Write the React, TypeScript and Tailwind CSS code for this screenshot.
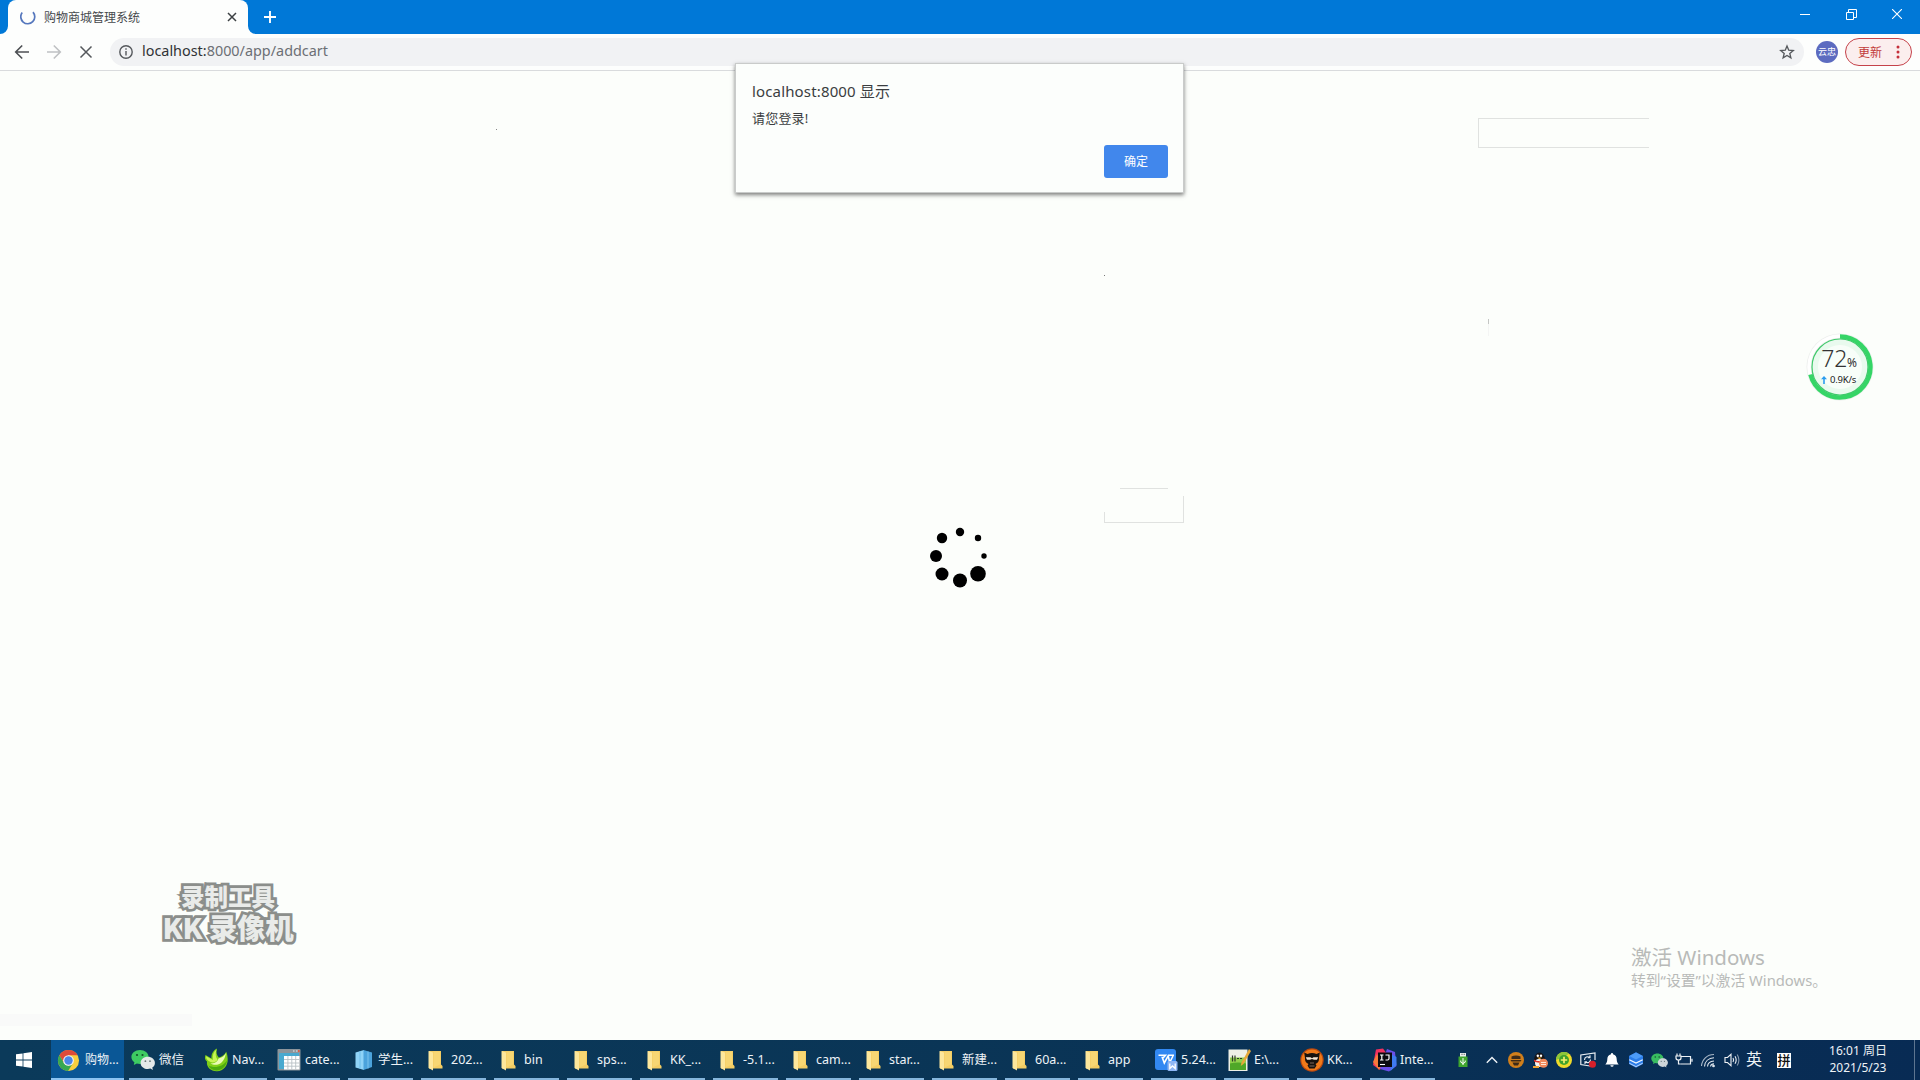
import React from "react";

const FONT = "font-['Noto_Sans','Noto_Sans_CJK_SC',sans-serif]";

/* ---------- task bar icons ---------- */

const Chrome = () => (
  <svg viewBox="0 0 24 24" className="size-[23px]">
    <circle cx="12" cy="12" r="11" fill="#f8cf3f" />
    <path d="M2.500 6.500A11 11 0 0 1 21.600 6.600H12L7.300 14.700Z" fill="#dd4b3a" />
    <path d="M2.500 6.500A11 11 0 0 0 11.600 23L16.700 14.700 12 17.400 7.300 14.700Z" fill="#37a852" />
    <circle cx="12" cy="12" r="5.600" fill="#f4f4f4" />
    <circle cx="12" cy="12" r="4.400" fill="#4a86e8" />
  </svg>
);

const WeChat = ({ className = "size-6" }: { className?: string }) => (
  <svg viewBox="0 0 24 24" className={className}>
    <path d="M9 2C4.200 2 .4 5.100 .4 9c0 2.200 1.200 4 3 5.300L2.800 17l3-1.500c1 .3 2 .5 3.200.5 4.800 0 8.600-3.100 8.600-7S13.800 2 9 2Z" fill="#3ecb62" />
    <circle cx="6" cy="7" r="1.100" fill="#14502b" />
    <circle cx="11.500" cy="7" r="1.100" fill="#14502b" />
    <path d="M16.800 8.800c-4 0-7.200 2.700-7.200 6.100s3.200 6.100 7.200 6.100c.9 0 1.800-.1 2.600-.4l2.500 1.300-.6-2.300c1.600-1.100 2.600-2.800 2.600-4.700 0-3.400-3.200-6.100-7.100-6.100Z" fill="#e3e8e8" />
    <circle cx="14.400" cy="13.200" r=".9" fill="#6b7b7b" />
    <circle cx="19" cy="13.200" r=".9" fill="#6b7b7b" />
  </svg>
);

const Navicat = () => (
  <svg viewBox="0 0 24 24" className="size-6">
    <path d="M13 .5C9 2.500 7 6.500 7.500 10.500L1.500 7C.3 10 1 12 3 13.500 2 19 7 23.500 13 23.300 19.500 23 24 17.500 23.700 11c-.1-2.800-.6-5.200-1.500-7.200-1.800 3.200-4.200 5-7.400 5.700C12.500 7 12 4 13 .5Z" fill="#7fd018" />
    <path d="M12.500 1.500C9.500 4 8.200 7.500 9 12L2 8.200C2 11 4 13 6.500 14c2.500 1 5.500.3 7-2.200C11.500 9 11.200 5 12.500 1.500Z" fill="#c8f457" />
    <path d="M22 5c-1.500 3-4.500 5-7.500 5.500-1 3-4 5.500-8 4.800C11 18.500 20 17.500 22 5Z" fill="#eafbb4" />
    <path d="M4.500 17.500C10 20.500 19 19 23 12.500c-.5 5.500-5 9.800-10.500 9.900-3.700 0-6.700-2-8-4.900Z" fill="#4cab10" />
  </svg>
);

const Table = () => (
  <svg viewBox="0 0 24 24" className="size-6">
    <rect x=".5" y="1" width="23" height="21.500" rx="1" fill="#8c959b" />
    <rect x="2" y="5" width="20" height="16" fill="#49a9cf" />
    <rect x="7" y="8" width="15.500" height="13.500" fill="#fff" />
    <path d="M7 11.500h15.500M7 15h15.500M7 18.200h15.500M10.900 8v13.500M14.800 8v13.500M18.700 8v13.500" stroke="#b9c1c5" strokeWidth=".9" />
    <path d="M16 3h1.500M19 3h1.500" stroke="#e9edef" strokeWidth="1.200" />
    <path d="M21.800 2v2" stroke="#e2573f" strokeWidth="1.500" />
  </svg>
);

const Book = () => (
  <svg viewBox="0 0 24 24" className="ml-0.5 size-6">
    <path d="M3.500 4.500 12 2v20L3.500 19.500Z" fill="#8fd3f7" />
    <path d="m11.500 2 8.500 2.500v14.500L11.500 22Z" fill="#4ba3dc" />
    <path d="M8 3.200v17.500" stroke="#6cbdea" strokeWidth="1" />
    <path d="M16 3.500v17" stroke="#7cc4ee" strokeWidth="1" />
  </svg>
);

const Folder = () => (
  <svg viewBox="0 0 24 24" className="ml-0.5 size-6">
    <path d="M4 3h12v13.500l1.500 1.500v2.500H4Z" fill="#f4cd63" />
    <path d="M3.500 3 8 4.500v18L3.500 20Z" fill="#fde79c" />
    <path d="M8.500 3.500H15v13l-6.500 3Z" fill="#f7d673" />
  </svg>
);

const Wps = () => (
  <svg viewBox="0 0 24 24" className="ml-px size-6">
    <rect x="1" y="1" width="21" height="21" rx="3" fill="#3288f2" />
    <path d="M4.500 7.200h7l-2 2.300H8.300l2 5.500L14.500 7.200H20M14.200 8l1.500 6.500L19 8" fill="none" stroke="#fff" strokeWidth="1.600" />
    <rect x="13.500" y="13" width="10" height="10" rx="1.500" fill="#8fb6f4" />
    <path d="M15.800 15.500v5l2.700-2.500 2.700 2.500v-5" fill="none" stroke="#fff" strokeWidth="1.300" />
  </svg>
);

const Notepad = () => (
  <svg viewBox="0 0 24 24" className="ml-px size-6">
    <path d="M1.500 1.500h19V23h-19Z" fill="#eef0e6" />
    <path d="M3 9.500h16V22H3Z" fill="#8fd04c" />
    <path d="M3 15.500c5-1.500 11-1.500 16 0V22H3Z" fill="#4fa728" />
    <path d="M5.500 7.500v6M8 7.500v6M10 10.500h2M13 10.500h2" stroke="#2f3a2a" strokeWidth="1.200" />
    <path d="M22 1 14.500 14.500l-.8 3.500L16.500 16 24 3Z" fill="#e6a93a" />
  </svg>
);

const Ninja = ({ className = "ml-px size-6" }: { className?: string }) => (
  <svg viewBox="0 0 24 24" className={className}>
    <circle cx="12" cy="12" r="11.700" fill="#b9480f" />
    <circle cx="12" cy="12" r="10.600" fill="#f07a1a" />
    <path d="M4.200 4.500 7.500 6c3-1.300 6-1.300 9 0l3.300-1.500-.8 5.500c.3 3-1 5-3.500 6l1 1.500-1.800 3H9.300l-1.800-3 1-1.500C6 15 4.700 13 5 10Z" fill="#17120f" />
    <path d="M5.800 9.300h4.700l1.500 1 1.500-1h4.700l-1.200 2.500h-3L12 11l-2 .8H7Z" fill="#f3e4d2" />
    <path d="M10 15h4M9.500 18h5" stroke="#8a7464" strokeWidth=".9" />
  </svg>
);

const Idea = () => (
  <svg viewBox="0 0 24 24" className="ml-px size-6">
    <path d="M3 1.500 10 .5 14 6 7 22 0 17Z" fill="#f2305f" />
    <path d="M0 14 4 6l5 10-3 6Z" fill="#f77b3a" />
    <path d="m14 1 8 3 1.500 14L16 23.500 7 21Z" fill="#6a4fe8" />
    <path d="m18 6 5.500 3v8l-6 6Z" fill="#3f7bf0" />
    <rect x="5" y="4.500" width="14" height="14.500" fill="#0b0b10" />
    <path d="M7 7h3.500M8.800 7v5M7 12h3.500M12.500 7H16v3.500Q16 12 14.500 12h-2" fill="none" stroke="#fff" strokeWidth="1.200" />
    <path d="M7 16.500h5" stroke="#fff" strokeWidth="1.100" />
  </svg>
);

const tasks: { icon: React.ReactNode; label: string }[] = [
  { icon: <WeChat />, label: "微信" },
  { icon: <Navicat />, label: "Nav..." },
  { icon: <Table />, label: "cate..." },
  { icon: <Book />, label: "学生..." },
  { icon: <Folder />, label: "202..." },
  { icon: <Folder />, label: "bin" },
  { icon: <Folder />, label: "sps..." },
  { icon: <Folder />, label: "KK_..." },
  { icon: <Folder />, label: "-5.1..." },
  { icon: <Folder />, label: "cam..." },
  { icon: <Folder />, label: "star..." },
  { icon: <Folder />, label: "新建..." },
  { icon: <Folder />, label: "60a..." },
  { icon: <Folder />, label: "app" },
  { icon: <Wps />, label: "5.24..." },
  { icon: <Notepad />, label: "E:\\..." },
  { icon: <Ninja />, label: "KK..." },
  { icon: <Idea />, label: "Inte..." },
];

/* ---------- tray icons ---------- */

const S = "size-4";

const trayIcons: React.ReactNode[] = [
  <svg viewBox="0 0 16 16" className={S}>
    <circle cx="8" cy="8" r="8" fill="#d07f1c" />
    <path d="M3.500 4.500C6 3 10 3 12.500 4.500V7h-9ZM2.500 8h11l-1 1.500h-9ZM4.500 10.500h7L10 13.500H6Z" fill="#3d2a18" />
  </svg>,
  <svg viewBox="0 0 16 16" className={S}>
    <ellipse cx="7.500" cy="8" rx="5.500" ry="7.500" fill="#15151a" />
    <ellipse cx="7" cy="11" rx="4" ry="4" fill="#f3f3f3" />
    <circle cx="5.800" cy="3.800" r="1.200" fill="#fff" />
    <circle cx="9" cy="3.800" r="1.200" fill="#fff" />
    <path d="M5 5.600h5L7.500 7.200Z" fill="#f5a623" />
    <path d="M2 7.500c3 2 8 2 11 0v2C9 11 5 11 2 9.500Z" fill="#e0322b" />
    <path d="M1 14h6v2H1Z" fill="#f0a030" />
    <circle cx="11.500" cy="11.300" r="4.500" fill="#f0875a" />
    <path d="M9 10.500h5M9 12.500h5" stroke="#ffe7d8" strokeWidth="1" />
  </svg>,
  <svg viewBox="0 0 16 16" className={S}>
    <circle cx="8" cy="8" r="8" fill="#f0da2a" />
    <path d="M0 8A8 8 0 0 1 13 1.800L8 5Z" fill="#8cc63a" />
    <circle cx="8" cy="8" r="5" fill="#3fa12c" />
    <path d="M8 4.800v6.400M4.800 8h6.400" stroke="#f5f06a" strokeWidth="1.700" />
  </svg>,
  <svg viewBox="0 0 16 16" className={S} fill="none">
    <path d="M15 8V1L.8 3v9.500L10 14" stroke="#e8edf2" strokeWidth="1.200" />
    <path d="M4.500 8c0-3 3-4 5.500-2.500M10 3.300V5.800H7.800M10.500 7.500c0 3-3 4-5.500 2.200M5 12V9.700h2" stroke="#e8edf2" strokeWidth="1.100" />
    <circle cx="12.500" cy="12.300" r="3.500" fill="#d8202b" />
  </svg>,
  <svg viewBox="0 0 16 16" className={S}>
    <path d="M8 1c.7 0 1 .5 1 1.200 2.500.5 3.700 2.500 3.700 5 0 2.500.8 4 2 5.300H1.300c1.200-1.300 2-2.800 2-5.300 0-2.500 1.200-4.500 3.700-5C7 1.500 7.300 1 8 1Z" fill="#fff" />
    <path d="M6.300 13.200h3.400Q9.500 14.800 8 14.800T6.300 13.200Z" fill="#fff" />
  </svg>,
  <svg viewBox="0 0 16 16" className={S}>
    <path d="m8 .3 7 3.600v8L8 15.800 1 12V4Z" fill="#2b7de9" />
    <path d="m8 .5 6.700 3.500L8 7.500 1.300 4Z" fill="#4d9bf7" />
    <path d="m1.300 7.700 6.700 3.400 6.700-3.400" fill="none" stroke="#f0f7ff" strokeWidth="1.200" />
    <path d="m1.300 11.200 6.700 3.400 6.700-3.400" fill="none" stroke="#cfe3ff" strokeWidth=".9" />
  </svg>,
  <WeChat className="size-[17px] opacity-90" />,
  <svg viewBox="0 0 18 16" className="h-4 w-[18px]" fill="none" stroke="#eef2f6" strokeWidth="1.200">
    <path d="M6 4.500h9.500v7.500H5.500M17 6.800v3" />
    <path d="M2 1.500V4M5 1.500V4M1 4h5v2q0 2-2.500 2T1 6ZM3.500 8v4h2" />
  </svg>,
  <svg viewBox="0 0 16 16" className={S} fill="none" stroke="#dfe6ee" strokeWidth="1.100">
    <path d="M1.500 14C2 7.500 7 2.500 14 2.500" opacity=".75" />
    <path d="M4.500 14.500C4.800 9.500 8.500 6 14 5.800" />
    <path d="M7.500 14.500c.2-3 2.500-5.300 6.500-5.500" />
    <path d="M10.500 14.500c.2-1.500 1.300-2.500 3.500-2.600" />
    <circle cx="13.500" cy="14" r=".8" fill="#fff" />
  </svg>,
  <svg viewBox="0 0 16 16" className={S} fill="none" stroke="#eef2f6" strokeWidth="1.100">
    <path d="M1 5.500h2.500L7 2.300v11.400L3.500 10.500H1Z" />
    <path d="M9 6q1.200 2 0 4M11 4.200q2.400 3.800 0 7.600" />
    <path d="M13.200 2.500q3.400 5.500 0 11" opacity=".55" />
  </svg>,
];

function TitleBar() {
  return (
    <header className="flex h-[34px] shrink-0 bg-[#0078d7] pl-2">
      <div className="relative flex h-full w-[240px] items-center rounded-t-[8px] bg-[#fdfefd] pb-[1px] pl-3 pr-2.5">
        <svg viewBox="0 0 8 8" className="absolute -left-2 bottom-0 size-2">
          <path d="M8 0v8H0a8 8 0 0 0 8-8Z" fill="#fdfefd" />
        </svg>
        <svg viewBox="0 0 8 8" className="absolute -right-2 bottom-0 size-2">
          <path d="M0 0v8h8a8 8 0 0 1-8-8Z" fill="#fdfefd" />
        </svg>
        <svg viewBox="0 0 16 16" className="size-4" fill="none" stroke="#5577bd" strokeWidth="1.700">
          <path d="M2.200 3.500A7 7 0 1 0 13 3.100" />
        </svg>
        <span className="ml-2 flex-1 whitespace-nowrap pt-0.5 text-[12px] text-[#45484c]">购物商城管理系统</span>
        <svg viewBox="0 0 12 12" className="size-3" stroke="#3c4043" strokeWidth="1.500">
          <path d="m2 2 8 8M10 2l-8 8" />
        </svg>
      </div>
      <svg viewBox="0 0 12 12" className="ml-4 mt-[11px] size-3" stroke="#fff" strokeWidth="1.900">
        <path d="M6 0v12M0 6h12" />
      </svg>
      <div className="ml-auto flex h-[28px] text-white">
        <div className="flex w-[46px] items-center justify-center">
          <svg viewBox="0 0 10 10" className="size-2.5" stroke="currentColor"><path d="M0 5.500h10" /></svg>
        </div>
        <div className="flex w-[46px] items-center justify-center">
          <svg viewBox="0 0 11 11" className="size-[11px]" fill="none" stroke="currentColor">
            <path d="M.5 3.500h7v7h-7ZM2.500 3.500v-3h8v8h-3" />
          </svg>
        </div>
        <div className="flex w-[46px] items-center justify-center">
          <svg viewBox="0 0 10 10" className="size-2.5" stroke="currentColor" strokeWidth="1.100"><path d="m0 0 10 10M10 0 0 10" /></svg>
        </div>
      </div>
    </header>
  );
}

function Toolbar() {
  return (
    <nav className="flex h-[37px] shrink-0 items-center border-b border-[#d9dbdd] bg-[#fdfefd] pl-3.5 pr-2">
      <svg viewBox="0 0 16 16" className="size-4" fill="none" stroke="#4d5054" strokeWidth="1.600"><path d="M15 8H2M8.200 1.500 1.700 8l6.500 6.500" /></svg>
      <svg viewBox="0 0 16 16" className="ml-4 size-4" fill="none" stroke="#bfc1c3" strokeWidth="1.600"><path d="M1 8h13M7.800 1.500 14.300 8l-6.500 6.500" /></svg>
      <svg viewBox="0 0 16 16" className="ml-4 size-4" fill="none" stroke="#55585c" strokeWidth="1.500"><path d="m2.500 2.500 11 11M13.500 2.500l-11 11" /></svg>
      <div className="ml-4 flex h-[28px] flex-1 items-center rounded-full bg-[#f1f2f4] pl-[9px]">
        <svg viewBox="0 0 14 14" className="size-3.5" fill="none" stroke="#55585c" strokeWidth="1.400">
          <circle cx="7" cy="7" r="6.200" /><path d="M7 6v4.500M7 3.300v1.500" />
        </svg>
        <span className="ml-[9px] whitespace-nowrap pb-0.5 text-[14.400px] leading-none text-[#6c6f74]">
          <span className="text-[#303236]">localhost:</span>8000/app/addcart
        </span>
        <svg viewBox="0 0 24 24" className="ml-auto mr-[9px] size-4" fill="none" stroke="#55585c" strokeWidth="2">
          <path d="m12 3 2.600 6.300 6.800.5-5.200 4.400 1.600 6.600-5.800-3.600-5.800 3.600 1.600-6.600-5.200-4.400 6.800-.5Z" />
        </svg>
      </div>
      <div className="ml-3 flex size-[22px] items-center justify-center rounded-full bg-[#5c6bc0] text-[9px] text-white">云忠</div>
      <div className="ml-[7px] flex h-[28px] w-[67px] items-center rounded-full border border-[#c5424a] bg-[#fbeeee] pl-3 text-[12px] text-[#c23a3a]">
        <span className="pt-px">更新</span>
        <svg viewBox="0 0 4 14" className="ml-auto mr-[11px] h-3.5 w-1" fill="#c5303a">
          <circle cx="2" cy="2" r="1.500" /><circle cx="2" cy="7" r="1.500" /><circle cx="2" cy="12" r="1.500" />
        </svg>
      </div>
    </nav>
  );
}

function AlertDialog() {
  return (
    <section className="absolute left-[735px] top-[63px] flex h-[130px] w-[449px] flex-col border border-[#c9cbca] bg-[#fcfefc] px-[15px] pb-[14px] pt-[17px] shadow-[0_2px_4px_rgba(0,0,0,0.5)]">
      <h1 className="pl-px text-[15px] leading-5 tracking-[0.150px] text-[#3a3d40]">localhost:8000 显示</h1>
      <p className="mt-[7px] pl-px text-[13px] leading-5 tracking-[0.200px] text-[#3a3d40]">请您登录!</p>
      <button className="ml-auto mt-auto h-[33px] w-[64px] rounded-[3px] bg-[#4187ec] text-[12px] text-white">确定</button>
    </section>
  );
}

function NetMeter() {
  return (
    <div className="absolute left-[1806px] top-[333px] flex size-[68px] flex-col items-center justify-center">
      <svg viewBox="0 0 68 68" className="absolute inset-0 size-full" fill="none">
        <circle cx="34" cy="34" r="33.500" fill="#eceeec" />
        <circle cx="34" cy="34" r="31" stroke="#fff" strokeWidth="3.500" />
        <path d="M34 3.500A30.500 30.500 0 1 1 4.400 41.500" stroke="#35d566" strokeWidth="4.500" />
        <circle cx="34" cy="34" r="28" fill="#e9faee" stroke="#3fca6b" strokeWidth="1.200" />
        <circle cx="34" cy="34" r="22" fill="#f8fef9" />
      </svg>
      <div className="relative mr-0.5 mt-[-3px] font-['Noto_Sans',sans-serif] text-[23px] font-light leading-6 tracking-[-0.3px] text-[#333]">
        72<span className="text-[12px] font-normal">%</span>
      </div>
      <div className="relative mr-[3px] flex items-center gap-[3px] font-['Noto_Sans',sans-serif] text-[9.500px] leading-[10px] tracking-[-0.2px] text-[#222]">
        <svg viewBox="0 0 6 8" className="h-2 w-1.5" fill="#2a9df0"><path d="M3 0 6 3.200H3.800V8H2.200V3.200H0Z" /></svg>
        0.9K/s
      </div>
    </div>
  );
}

function Spinner() {
  return (
    <svg viewBox="0 0 64 64" className="absolute left-[928px] top-[524px] size-16" fill="#000">
      <circle cx="32" cy="8" r="4.200" />
      <circle cx="50" cy="14" r="3.200" />
      <circle cx="56" cy="32" r="2.700" />
      <circle cx="50" cy="49.800" r="7.800" />
      <circle cx="32" cy="56.500" r="7" />
      <circle cx="14" cy="50" r="6.500" />
      <circle cx="8" cy="32" r="6" />
      <circle cx="14" cy="14" r="5.200" />
    </svg>
  );
}

/* Faint outlines that remain from the previously painted page. */
function Residue() {
  return (
    <>
      <div className="absolute left-[1478px] top-[118px] h-[30px] w-[171px] border border-r-0 border-[#e0e2e0]" />
      <div className="absolute left-[1120px] top-[488px] h-px w-12 bg-[#e0e2e0]" />
      <div className="absolute left-[1104px] top-[512px] h-[11px] w-20 border-b border-l border-[#e0e2e0]" />
      <div className="absolute left-[1183px] top-[496px] h-[26px] w-px bg-[#e0e2e0]" />
      <div className="absolute left-[1104px] top-[275px] size-px bg-[#777]" />
      <div className="absolute left-[496px] top-[129px] size-px bg-[#888]" />
      <div className="absolute left-[1488px] top-[319px] h-[5px] w-px bg-[#c4c6c4]" />
      <div className="absolute left-[1488px] top-[324px] h-3 w-px bg-[#f4f5f4]" />
      <div className="absolute left-0 top-[1014px] h-3 w-48 bg-[#f9faf9]" />
    </>
  );
}

function RecorderMark() {
  return (
    <div className="absolute left-[158px] top-[881px] flex w-[140px] flex-col items-center whitespace-nowrap font-['Noto_Sans_CJK_SC',sans-serif] font-black text-[#e9ebe9] [-webkit-text-stroke:5.500px_#8b8e8b] [paint-order:stroke_fill] [stroke-linejoin:round]">
      <span className="text-[23.500px] leading-[30px]">录制工具</span>
      <span className="text-[28.500px] leading-[31px] tracking-[-0.2px]">KK 录像机</span>
    </div>
  );
}

function Activation() {
  return (
    <div className="absolute left-[1631px] top-[943px] whitespace-nowrap text-[#b8bab8]">
      <p className="text-[20.500px] leading-7">激活 Windows</p>
      <p className="mt-[-1px] text-[14.800px] leading-5">转到“设置”以激活 Windows。</p>
    </div>
  );
}

function Taskbar() {
  return (
    <footer className="flex h-10 shrink-0 bg-linear-to-r from-[#0b3a5a] via-[#0a3556] to-[#082b54] text-[12px] text-[#eef3f7]">
      <div className="flex w-12 items-center justify-center">
        <svg viewBox="0 0 16 16" className="size-4" fill="#fff">
          <path d="M0 2.300 6.600 1.400v6.200H0ZM7.400 1.300 16 0v7.600H7.400ZM0 8.400h6.600v6.200L0 13.700ZM7.400 8.400H16V16l-8.600-1.300Z" />
        </svg>
      </div>
      <div className="ml-[3px] flex w-[73px] items-center whitespace-nowrap border-b-2 border-[#8cc4f2] bg-[#0a5796] pl-1.5 pt-0.5">
        <Chrome />
        <span className="ml-[5px]">购物...</span>
      </div>
      <div className="ml-[5px] flex gap-2">
        {tasks.map((t, i) => (
          <div key={i} className="flex w-[65px] items-center whitespace-nowrap border-b-2 border-[#86b6dc] pl-0.5 pt-0.5">
            <div className="flex w-7 shrink-0 items-center">{t.icon}</div>
            <span className="text-[12.500px]">{t.label}</span>
          </div>
        ))}
      </div>
      <div className="ml-auto flex items-center">
        <svg viewBox="0 0 12 16" className="h-4 w-3">
          <path d="M3 1h6v4H3Z" fill="#e8ecec" /><path d="M4.500 2.300h1M6.700 2.300h1" stroke="#444" />
          <path d="M1.500 4.500h9V15h-9Z" fill="#3fa62f" />
          <path d="M6 6v7M3.800 8.500v1.700L6 11.500l2.200-1.300V8.500" fill="none" stroke="#fff" />
        </svg>
        <svg viewBox="0 0 12 8" className="ml-[17px] h-2 w-3" fill="none" stroke="#eef3f7" strokeWidth="1.400"><path d="m.8 6.800 5.200-5.200 5.200 5.200" /></svg>
        <div className="ml-1.5 flex">
          {trayIcons.map((icon, i) => (
            <div key={i} className="flex w-6 items-center justify-center">{icon}</div>
          ))}
        </div>
        <span className="ml-0.5 pb-0.5 text-[16px] leading-none">英</span>
        <span className="ml-[15px] flex h-[15px] w-[14px] items-center justify-center bg-white text-[13px] font-medium leading-none text-[#111]">拼</span>
        <div className="ml-[27px] flex w-[80px] flex-col items-center whitespace-nowrap pb-0.5 leading-[17px]">
          <span>16:01 周日</span>
          <span>2021/5/23</span>
        </div>
        <div className="ml-[16px] h-full w-[6px] border-l border-[#5d7590]" />
      </div>
    </footer>
  );
}

export default function App() {
  return (
    <div className={`relative flex h-[1080px] w-[1920px] flex-col overflow-hidden bg-[#fcfefb] ${FONT}`}>
      <TitleBar />
      <Toolbar />
      <main className="flex-1">
        <Residue />
        <Spinner />
        <NetMeter />
        <RecorderMark />
        <Activation />
        <AlertDialog />
      </main>
      <Taskbar />
    </div>
  );
}
